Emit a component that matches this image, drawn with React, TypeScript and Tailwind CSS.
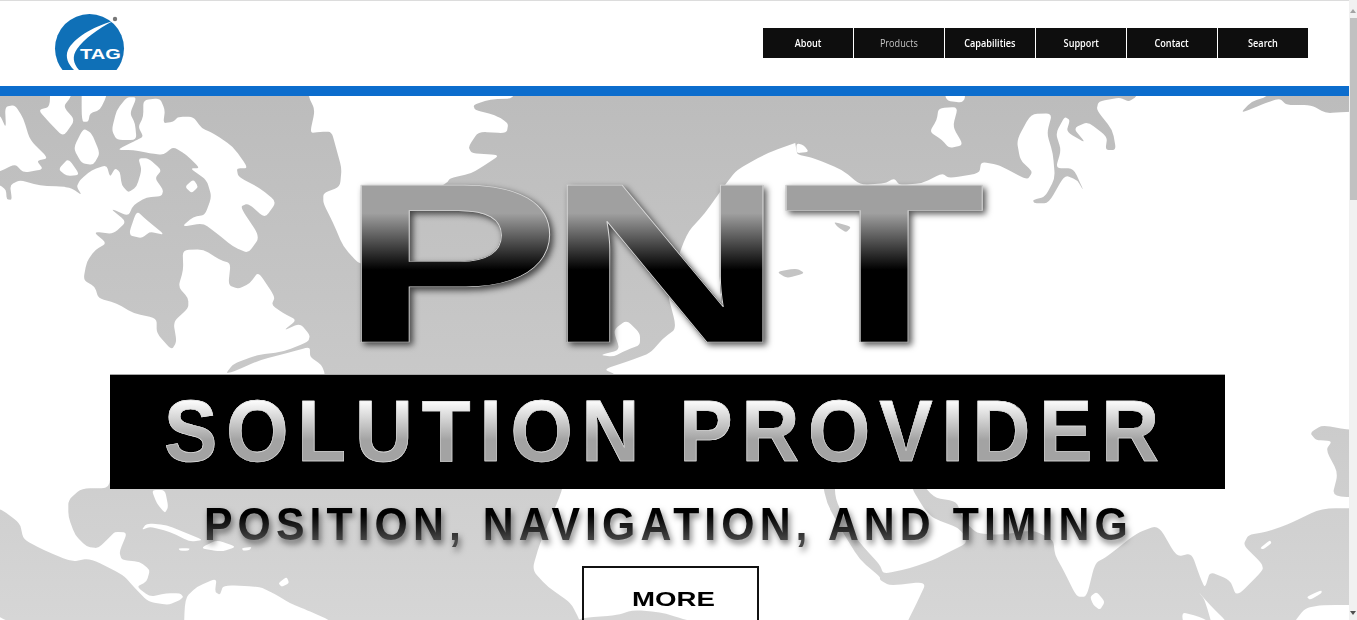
const nav = ["About", "Products", "Capabilities", "Support", "Contact", "Search"];

// map outlines, traced per crop: [transform, gray areas, white areas]
// points that run off a crop go well past it, so the rounding never shows at a seam
const north = "translate(0 90) scale(0.3333)";
const middle = "translate(400 90) scale(0.3333)";
const east = "translate(800 90) scale(0.3552 0.3333)";
const south = "translate(0 480) scale(0.3333)";
const asia = "translate(800 420) scale(0.3333)";

const gray: [string, string][] = [
  [north, "-60,-60 925,-60 925,18 945,60 930,130 960,125 995,125 1010,180 1025,235 1020,290 970,310 970,340 1000,400 1030,470 1080,525 1155,516 1205,390 1300,390 1300,950 975,950 975,852 965,825 930,800 930,770 860,790 780,810 700,845 678,850 700,822 770,795 850,785 925,755 930,735 900,700 850,722 890,690 850,670 815,645 825,620 775,545 750,580 715,597 685,585 692,520 660,510 610,478 548,480 550,540 535,590 565,625 565,655 520,695 530,755 515,780 470,730 470,685 400,670 350,640 295,625 285,590 250,570 260,515 285,480 320,460 280,425 340,432 380,395 330,355 385,378 400,345 440,322 485,318 490,300 465,265 485,240 445,205 415,205 425,240 410,290 385,308 365,285 360,245 345,235 330,262 320,225 275,240 240,270 230,290 245,315 215,295 190,290 120,287 60,270 30,285 36,330 20,328 18,300 0,285 -60,285"],
  [middle, "345,-60 1250,-60 1250,135 1210,150 1100,190 1010,240 975,285 915,370 860,430 800,600 830,715 790,745 750,790 680,815 612,838 650,855 650,950 -60,950 -60,390 140,280 150,265 215,250 255,225 300,195 215,190 205,170 235,125 320,130 325,100 285,75 225,60 220,45 270,28 345,25"],
  [east, "-40,-60 950,-60 950,18 925,35 900,22 840,35 835,60 880,120 890,180 860,180 865,140 810,95 770,115 805,160 750,125 760,90 745,80 720,130 735,180 720,235 770,235 800,305 780,270 745,255 700,340 660,340 655,330 690,320 718,265 712,190 695,130 710,70 650,72 610,150 620,210 655,245 640,270 560,225 510,215 505,250 420,265 400,250 345,280 280,285 265,265 240,280 170,285 120,240 40,205 0,195 -10,190"],
  [east, "1240,70 1270,35 1320,18 1320,-60 1600,-60 1600,65 1540,65 1480,70 1440,45 1370,45 1350,25 1310,40"],
  [east, "95,395 145,410 130,428 105,410"],
  [middle, "1130,545 1190,535 1215,550 1160,565"],
  ["", "-20,470 563,470 563,489 540,543 532,570 548,587 571,603 580,621 585,640 -20,640"],
  ["", "560,640 575,621 583,618 618,615 633,610 660,612 680,618 690,621 700,640"],
  [asia, "60,150 105,150 105,235 150,330 190,380 240,435 250,462 330,445 400,420 440,400 500,370 490,340 470,322 400,295 375,270 335,205 335,150 400,232 470,245 490,300 530,340 600,345 700,330 760,360 765,405 790,450 830,530 860,530 885,430 920,410 1010,340 1075,315 1130,410 1175,400 1200,470 1215,505 1230,455 1290,480 1310,530 1390,450 1385,430 1330,375 1345,345 1400,335 1460,315 1565,265 1700,265 1700,700 300,700 320,610 350,550 380,485 270,497 240,480 240,470 180,420 130,340 80,250"],
  ["", "1310,433 1322,425 1349,430 1380,430 1380,497 1332,497 1338,473 1326,450 1332,441 1316,440"],
];

const white: [string, string][] = [
  [north, "-30,75 0,75 18,115 15,50 45,45 70,85 90,150 145,205 110,212 130,238 70,248 45,222 0,245 -30,245"],
  [north, "150,-40 215,-40 215,18 190,50 225,90 190,140 150,100 115,60 150,50"],
  [north, "245,-40 320,-40 320,18 300,60 270,70 265,95 245,95"],
  [north, "380,22 410,22 390,70 405,100 410,150 350,150 335,120 350,60"],
  [north, "430,30 480,25 495,60 490,100 520,95 535,80 580,80 605,115 640,130 700,170 745,235 710,235 715,260 780,295 830,335 795,385 745,340 720,350 780,440 745,490 700,470 650,430 610,400 545,410 580,380 615,375 635,320 620,270 570,235 600,235 560,195 520,170 490,195 450,190 400,180 350,180 410,150 430,140 415,110 430,80"],
  [north, "220,175 250,115 275,130 300,190 280,225 245,220"],
  [north, "175,238 205,205 240,255 200,258"],
  [north, "555,290 580,268 595,290 575,310"],
  [north, "385,435 410,362 440,390 495,435 450,425 425,445"],
  [middle, "285,80 305,85 320,105 300,100"],
  [middle, "600,795 660,780 640,720 680,690 720,730 720,765 680,780 640,800"],
  [east, "-10,160 10,165 25,185 -10,190"],
  [east, "405,-40 465,-40 465,25 455,38 410,32"],
  [east, "390,55 445,50 430,110 460,165 420,175 400,150 365,125 385,90"],
  [south, "-60,-60 330,-60 330,25 245,25 205,60 205,110 225,165 260,200 295,205 330,170 345,155 382,158 358,215 365,240 420,245 450,270 440,305 410,320 450,350 500,340 540,340 550,350 540,360 505,375 445,365 405,325 370,285 270,235 215,245 130,210 70,178 60,130 0,85 -60,85"],
  [south, "550,500 555,355 590,320 650,295 645,335 660,345 670,315 780,320 830,345 870,370 920,390 1000,425 1000,500"],
  [south, "455,30 495,30 505,80 495,100 470,70"],
  [south, "425,150 440,130 500,135 560,160 610,180 570,185 510,155 450,140"],
  [south, "600,205 650,180 710,200 665,215"],
  [south, "535,205 570,205 565,212 540,212"],
  [south, "725,205 755,200 750,210 730,212"],
  [south, "835,310 860,290 868,310 845,320"],
  [asia, "870,530 890,515 915,545 900,570 880,555"],
  [asia, "1380,385 1410,360 1415,370 1390,388"],
  [asia, "1140,575 1200,590 1235,610 1240,700 1180,700"],
  [asia, "1195,515 1230,555 1285,610 1285,700 1260,700 1215,540"],
  [asia, "1480,700 1480,610 1515,565 1565,555 1700,555 1700,700"],
  [asia, "1520,530 1565,510 1565,520 1530,540"],
];

// rounds the traced corners a little so the coasts don't look cut with scissors
function smooth(points: string) {
  const pts = points.split(" ").map((p) => p.split(",").map(Number));
  const at = (a: number[], b: number[], t: number) =>
    `${a[0] + (b[0] - a[0]) * t} ${a[1] + (b[1] - a[1]) * t}`;
  let d = "";
  pts.forEach((p, i) => {
    const prev = pts[(i + pts.length - 1) % pts.length];
    const next = pts[(i + 1) % pts.length];
    d += `${i ? "L" : "M"}${at(p, prev, 0.3)}Q${p[0]} ${p[1]} ${at(p, next, 0.3)}`;
  });
  return d + "Z";
}

function WorldMap() {
  return (
    <svg className="absolute inset-0" width="1349" height="524" viewBox="0 96 1349 524">
      <defs>
        <linearGradient id="sea" x1="0" y1="96" x2="0" y2="620" gradientUnits="userSpaceOnUse">
          <stop offset="0" stopColor="#bcbcbc" />
          <stop offset="0.55" stopColor="#c9c9c9" />
          <stop offset="1" stopColor="#d6d6d6" />
        </linearGradient>
        <filter id="soft" x="0" y="0" width="100%" height="100%">
          <feGaussianBlur stdDeviation="0.7" />
        </filter>
        <mask id="land" maskUnits="userSpaceOnUse" x="0" y="96" width="1349" height="524">
          <g filter="url(#soft)">
            {gray.map(([t, p], i) => (
              <path key={i} transform={t} d={smooth(p)} fill="#fff" />
            ))}
            {white.map(([t, p], i) => (
              <path key={i} transform={t} d={smooth(p)} fill="#000" />
            ))}
          </g>
        </mask>
      </defs>
      <rect x="0" y="96" width="1349" height="524" fill="url(#sea)" mask="url(#land)" />
    </svg>
  );
}

function Logo() {
  return (
    <svg width="80" height="62" viewBox="50 10 80 62" className="ml-[50px] mt-[9px]">
      <defs>
        <clipPath id="cut">
          <rect x="50" y="10" width="80" height="60" />
        </clipPath>
      </defs>
      <circle cx="89.5" cy="48.5" r="34.5" fill="#0f70b7" clipPath="url(#cut)" />
      <path d="M113 21 C92 27 74 38 68 50 C65 57 68 64 74 70 L79 70 C73 63 72 56 77 49 C84 39 98 29 113 21Z" fill="#fff" />
      <circle cx="115" cy="19" r="2.2" fill="#777" />
      <text x="80" y="59" textLength="41" lengthAdjust="spacingAndGlyphs" fill="#fff" fontFamily="Liberation Sans" fontWeight="700" fontSize="15">
        TAG
      </text>
    </svg>
  );
}

function Scrollbar() {
  return (
    <div className="relative w-2 h-full bg-[#f1f1f1]">
      <div className="ml-px mt-[9px] w-0 h-0 border-x-[3px] border-x-transparent border-b-[4px] border-b-[#a3a3a3]" />
      <div className="absolute left-px top-[18px] w-[7px] h-[182px] bg-[#c1c1c1]" />
      <div className="absolute left-px bottom-[5px] w-0 h-0 border-x-[3px] border-x-transparent border-t-[4px] border-t-[#505050]" />
    </div>
  );
}

export default function App() {
  return (
    <div className="flex h-[620px] w-[1357px] overflow-hidden bg-white font-['Liberation_Sans',sans-serif]">
      <div className="w-[1349px] shrink-0">
        <header className="flex h-[86px] justify-between border-t border-[#dcdcdc]">
          <Logo />
          <nav className="mr-[41px] mt-[27px] flex h-[30px] gap-px font-['Open_Sans',sans-serif] text-[11px]">
            {nav.map((item) => (
              <a
                key={item}
                href="#"
                className={`flex w-[90px] items-center justify-center bg-[#0e0e0e] ${
                  item === "Products" ? "text-[#c4c4c4]" : "font-semibold text-white"
                }`}
              >
                <span className="inline-block scale-x-[0.83]">{item}</span>
              </a>
            ))}
          </nav>
        </header>
        <div className="h-[10px] bg-[#0c6dcd]" />
        <section className="relative h-[524px] overflow-hidden">
          <WorldMap />
          <div className="relative">
            <div className="ml-[339px] mt-[89px] h-[157px] drop-shadow-[3px_3px_3px_rgba(0,0,0,0.65)]">
              <h1 className="inline-block origin-left scale-x-[1.46] bg-[linear-gradient(180deg,#a0a0a0_18%,#000_54%)] bg-clip-text text-[228px] font-bold leading-[157px] text-transparent [-webkit-text-stroke:0.7px_#d8d8d8]">
                <span className="tracking-[-11px]">P</span>
                <span className="tracking-[-2px]">N</span>T
              </h1>
            </div>
            <div className="ml-[110px] mt-[32px] flex h-[115px] w-[1115px] items-center border-t border-[#a8a8a8] bg-black pb-[2px] pl-[54px]">
              <h2 className="inline-block origin-left scale-x-[0.92] bg-[linear-gradient(180deg,#fff_22%,#a3a3a3_58%)] bg-clip-text text-[87px] font-bold leading-[112px] tracking-[9.6px] whitespace-nowrap text-transparent [-webkit-text-stroke:0.6px_#e4e4e4]">
                SOLUTION PROVIDER
              </h2>
            </div>
            <div className="ml-[204px] mt-[5px] h-[60px] drop-shadow-[2px_4px_3px_rgba(0,0,0,0.5)]">
              <p className="inline-block origin-left scale-x-[0.92] bg-[linear-gradient(180deg,#000_35%,#474747_78%)] bg-clip-text text-[46.5px] font-bold leading-[60px] tracking-[5.5px] whitespace-nowrap text-transparent">
                POSITION, NAVIGATION, AND TIMING
              </p>
            </div>
            <a href="#" className="ml-[582px] mt-[12px] flex h-[66px] w-[177px] items-center border-2 border-[#111] pl-[48px]">
              <span className="inline-block origin-left scale-x-[1.38] text-[20px] font-bold leading-none text-black">MORE</span>
            </a>
          </div>
        </section>
      </div>
      <Scrollbar />
    </div>
  );
}
